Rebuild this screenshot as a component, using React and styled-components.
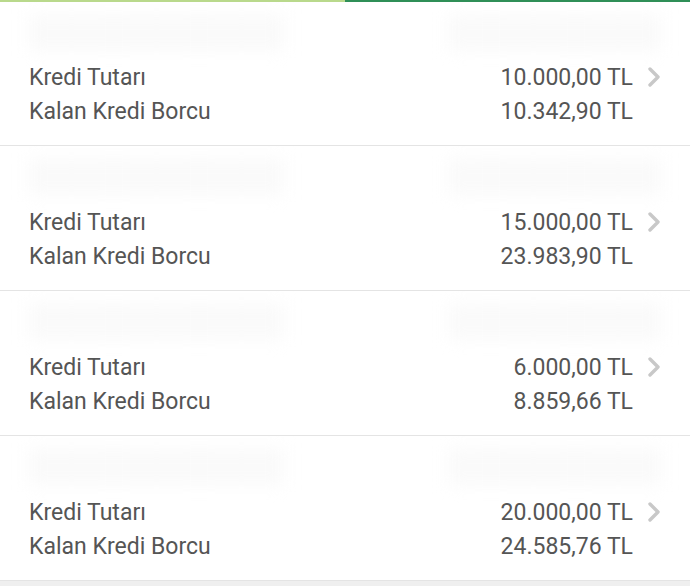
import React from "react";
import styled, { createGlobalStyle } from "styled-components";

const GlobalStyle = createGlobalStyle`
  html, body {
    margin: 0;
    padding: 0;
    background: #efefef;
  }
  body {
    font-family: Roboto, "Noto Sans", Arial, sans-serif;
  }
`;

const Page = styled.div`
  width: 690px;
  min-height: 586px;
  display: flex;
  flex-direction: column;
`;

const Progress = styled.div`
  display: flex;
  height: 2px;
`;

const ProgressPart = styled.div`
  flex: ${({ $grow }) => $grow};
  background: ${({ $color }) => $color};
`;

const Card = styled.div`
  background: #ffffff;
  height: ${({ $first }) => ($first ? 144 : 145)}px;
  box-sizing: border-box;
  border-bottom: 1px solid #e4e4e4;
  padding: 0 29px;
  display: flex;
  flex-direction: column;
  overflow: hidden;
`;

const Blur = styled.div`
  height: ${({ $first }) => ($first ? 58 : 59)}px;
  display: flex;
  align-items: center;
  justify-content: space-between;
  color: #fafafa;
  font-size: 30px;
  filter: blur(8px);
`;

const Row = styled.div`
  display: flex;
  align-items: center;
  height: 34px;
  font-size: 23px;
  color: #555555;
`;

const Label = styled.span`
  flex: 1;
`;

const Value = styled.span`
  text-align: right;
`;

const ChevronSlot = styled.span`
  width: 29px;
  display: flex;
  justify-content: flex-end;
  margin-right: -1px;
`;

const Chevron = () => (
  <svg width="16" height="20" viewBox="0 0 16 20">
    <path
      d="M4 2 L12 10 L4 18"
      fill="none"
      stroke="#c8c8c8"
      strokeWidth="3.4"
      strokeLinecap="round"
      strokeLinejoin="round"
    />
  </svg>
);

const loans = [
  { amount: "10.000,00 TL", remaining: "10.342,90 TL" },
  { amount: "15.000,00 TL", remaining: "23.983,90 TL" },
  { amount: "6.000,00 TL", remaining: "8.859,66 TL" },
  { amount: "20.000,00 TL", remaining: "24.585,76 TL" },
];

const App = () => (
  <Page>
    <GlobalStyle />
    <Progress>
      <ProgressPart $grow={345} $color="#b9d98c" />
      <ProgressPart $grow={345} $color="#2f8f57" />
    </Progress>
    {loans.map((loan, i) => (
      <Card key={i} $first={i === 0}>
        <Blur $first={i === 0}>
          <span>████████████</span>
          <span>██████████</span>
        </Blur>
        <Row>
          <Label>Kredi Tutarı</Label>
          <Value>{loan.amount}</Value>
          <ChevronSlot>
            <Chevron />
          </ChevronSlot>
        </Row>
        <Row>
          <Label>Kalan Kredi Borcu</Label>
          <Value>{loan.remaining}</Value>
          <ChevronSlot />
        </Row>
      </Card>
    ))}
  </Page>
);

export default App;
